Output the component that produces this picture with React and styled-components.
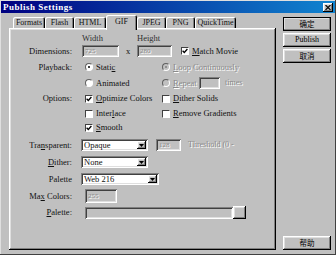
import React from 'react';
import styled, { createGlobalStyle, css } from 'styled-components';

const GlobalStyle = createGlobalStyle`
  html, body {
    margin: 0;
    padding: 0;
    background: #c0c0c0;
  }
  body {
    font-family: "Liberation Serif", "Times New Roman", serif;
    font-size: 8.5px;
    line-height: 1;
    color: #111;
  }
`;

const raised = css`
  box-shadow: inset -1px -1px #000, inset 1px 1px #fff, inset -2px -2px #808080,
    inset 2px 2px #dfdfdf;
`;

const sunken = css`
  box-shadow: inset 1px 1px #808080, inset -1px -1px #fff, inset 2px 2px #404040,
    inset -2px -2px #dfdfdf;
`;

const etched = css`
  color: #8a8a8a;
  text-shadow: 1px 1px 0 #fff;
`;

const tabs = [
  { name: 'Formats', w: 32 },
  { name: 'Flash', w: 29 },
  { name: 'HTML', w: 32 },
  { name: 'GIF', w: 31, active: true },
  { name: 'JPEG', w: 29 },
  { name: 'PNG', w: 29 },
  { name: 'QuickTime', w: 41 },
];

const Window = styled.div`
  width: 336px;
  height: 255px;
  box-sizing: border-box;
  padding: 1px;
  display: flex;
  flex-direction: column;
  background: #c0c0c0;
  box-shadow: inset -1px -1px #404040, inset 1px 1px #dfdfdf;
`;

const TitleBar = styled.div`
  height: 12px;
  flex-shrink: 0;
  display: flex;
  align-items: center;
  justify-content: space-between;
  padding: 0 2px;
  background: linear-gradient(to right, #000080, #1084d0);
`;

const Title = styled.span`
  color: #fff;
  font-weight: bold;
  font-size: 9px;
  letter-spacing: 0.5px;
`;

const CloseBox = styled.span`
  width: 10px;
  height: 9px;
  display: flex;
  align-items: center;
  justify-content: center;
  background: #c0c0c0;
  ${raised};
`;

const Body = styled.div`
  flex: 1;
  display: flex;
  padding: 2px 4px 4px 8px;
`;

const LeftCol = styled.div`
  width: 268px;
  display: flex;
  flex-direction: column;
`;

const TabRow = styled.div`
  height: 13px;
  flex-shrink: 0;
  display: flex;
  align-items: flex-end;
  padding-left: 4px;
  position: relative;
  z-index: 1;
`;

const Tab = styled.div`
  width: ${p => p.$w}px;
  height: ${p => (p.$active ? 15 : 11)}px;
  margin-bottom: ${p => (p.$active ? -2 : 0)}px;
  box-sizing: border-box;
  display: flex;
  align-items: center;
  justify-content: center;
  padding-bottom: ${p => (p.$active ? 2 : 0)}px;
  font-size: 8px;
  background: #c0c0c0;
  border-radius: 2px 2px 0 0;
  box-shadow: inset 1px 1px #fff, inset -1px 0 #000, inset -2px 0 #808080;
`;

const Panel = styled.div`
  flex: 1;
  padding: 6px 0 0 2px;
  ${raised};
`;

const Row = styled.div`
  height: ${p => p.$h}px;
  margin-top: ${p => p.$mt}px;
  display: flex;
  align-items: center;
`;

const Label = styled.span`
  width: 61px;
  margin-right: 9px;
  flex-shrink: 0;
  text-align: right;
  white-space: nowrap;
`;

const Controls = styled.div`
  height: 100%;
  display: flex;
  align-items: center;
  padding-left: ${p => p.$x || 0}px;
`;

const ColHead = styled.span`
  width: ${p => (p.$w ? `${p.$w}px` : 'auto')};
  color: #303030;
`;

const Field = styled.span`
  width: ${p => p.$w}px;
  height: ${p => p.$h || 12}px;
  margin-left: ${p => p.$ml || 0}px;
  box-sizing: border-box;
  flex-shrink: 0;
  display: flex;
  align-items: center;
  padding-left: 3px;
  font-size: 7px;
  background: ${p => (p.$disabled ? '#c0c0c0' : '#fff')};
  ${sunken};
  ${p => p.$disabled && etched};
`;

const Cross = styled.span`
  width: 18px;
  text-align: center;
`;

const Option = styled.label`
  width: ${p => (p.$w ? `${p.$w}px` : 'auto')};
  margin-left: ${p => p.$ml || 0}px;
  flex-shrink: 0;
  display: flex;
  align-items: center;
  gap: 3px;
  white-space: nowrap;
  ${p => p.$disabled && etched};
`;

const Box = styled.span`
  width: 8px;
  height: 8px;
  box-sizing: border-box;
  flex-shrink: 0;
  display: flex;
  align-items: center;
  justify-content: center;
  background: #fff;
  border: 1px solid;
  border-color: #404040 #fff #fff #404040;
  text-shadow: none;
`;

const Circle = styled.span`
  width: 8px;
  height: 8px;
  box-sizing: border-box;
  flex-shrink: 0;
  display: flex;
  align-items: center;
  justify-content: center;
  border-radius: 50%;
  border: 1px solid;
  border-color: #606060 #fff #fff #606060;
  background: ${p => (p.$disabled ? '#c0c0c0' : '#fff')};

  &::after {
    content: '';
    width: 2px;
    height: 2px;
    border-radius: 50%;
    background: ${p => (p.$disabled ? '#808080' : '#000')};
    display: ${p => (p.$on ? 'block' : 'none')};
  }
`;

const Key = styled.span`
  text-decoration: underline;
`;

const DimText = styled.span`
  margin-left: ${p => p.$ml || 0}px;
  white-space: nowrap;
  font-size: 8px;
  ${etched};
`;

const Select = styled.div`
  width: ${p => p.$w}px;
  height: 12px;
  box-sizing: border-box;
  display: flex;
  align-items: center;
  justify-content: space-between;
  padding: 2px 2px 2px 3px;
  background: #fff;
  ${sunken};
`;

const Arrow = styled.span`
  width: 9px;
  height: 8px;
  display: flex;
  align-items: center;
  justify-content: center;
  background: #c0c0c0;
  ${raised};
`;

const Browse = styled.span`
  width: 13px;
  height: 13px;
  flex-shrink: 0;
  background: #c0c0c0;
  ${raised};
`;

const RightCol = styled.div`
  width: 48px;
  margin-left: 7px;
  padding-top: 2px;
  display: flex;
  flex-direction: column;
  gap: 2px;
`;

const Button = styled.button`
  width: 48px;
  height: 14px;
  padding: 0;
  border: none;
  display: flex;
  align-items: center;
  justify-content: center;
  background: #c0c0c0;
  color: #000;
  font-family: ${p =>
    p.$cjk ? '"Noto Sans CJK SC", sans-serif' : '"Liberation Serif", serif'};
  font-size: ${p => (p.$cjk ? 7.5 : 8)}px;
  line-height: 1;
  ${raised};
  ${p => p.$default && 'outline: 1px solid #000; outline-offset: -1px;'};
  ${p => p.$bottom && 'margin-top: auto;'};
`;

const Tick = () => (
  <svg width="6" height="6" viewBox="0 0 6 6">
    <path d="M0.6 2.8 L2.3 4.5 L5.4 1" fill="none" stroke="#000" strokeWidth="1.3" />
  </svg>
);

const Check = ({ on }) => <Box>{on ? <Tick /> : null}</Box>;

const DropArrow = () => (
  <Arrow>
    <svg width="5" height="3" viewBox="0 0 5 3">
      <path d="M0 0 H5 L2.5 3 Z" fill="#000" />
    </svg>
  </Arrow>
);

const Dropdown = ({ w, value }) => (
  <Select $w={w}>
    <span>{value}</span>
    <DropArrow />
  </Select>
);

export default function App() {
  return (
    <>
      <GlobalStyle />
      <Window>
        <TitleBar>
          <Title>Publish Settings</Title>
          <CloseBox>
            <svg width="6" height="5" viewBox="0 0 6 5">
              <path d="M0.5 0 L5.5 5 M5.5 0 L0.5 5" stroke="#000" strokeWidth="1.1" />
            </svg>
          </CloseBox>
        </TitleBar>
        <Body>
          <LeftCol>
            <TabRow>
              {tabs.map(t => (
                <Tab key={t.name} $w={t.w} $active={t.active}>
                  {t.name}
                </Tab>
              ))}
            </TabRow>
            <Panel>
              <Row $h={8} $mt={0}>
                <Label />
                <Controls $x={1}>
                  <ColHead $w={55}>Width</ColHead>
                  <ColHead>Height</ColHead>
                </Controls>
              </Row>
              <Row $h={12} $mt={3}>
                <Label>Dimensions:</Label>
                <Controls $x={1}>
                  <Field $w={37} $disabled>725</Field>
                  <Cross>x</Cross>
                  <Field $w={35} $disabled>280</Field>
                  <Option $ml={9}>
                    <Check on />
                    <span>
                      <Key>M</Key>atch Movie
                    </span>
                  </Option>
                </Controls>
              </Row>
              <Row $h={10} $mt={5}>
                <Label>Playback:</Label>
                <Controls $x={4}>
                  <Option $w={77}>
                    <Circle $on />
                    <span>
                      Stati<Key>c</Key>
                    </span>
                  </Option>
                  <Option $disabled>
                    <Circle $on $disabled />
                    <span>
                      <Key>L</Key>oop Continuously
                    </span>
                  </Option>
                </Controls>
              </Row>
              <Row $h={12} $mt={5}>
                <Label />
                <Controls $x={4}>
                  <Option $w={77}>
                    <Circle />
                    <span>Animated</span>
                  </Option>
                  <Option $w={37} $disabled>
                    <Circle $disabled />
                    <span>
                      <Key>R</Key>epeat
                    </span>
                  </Option>
                  <Field $w={21} $disabled />
                  <DimText $ml={5}>times</DimText>
                </Controls>
              </Row>
              <Row $h={11} $mt={4}>
                <Label>Options:</Label>
                <Controls $x={4}>
                  <Option $w={77}>
                    <Check on />
                    <span>
                      <Key>O</Key>ptimize Colors
                    </span>
                  </Option>
                  <Option>
                    <Check />
                    <span>
                      <Key>D</Key>ither Solids
                    </span>
                  </Option>
                </Controls>
              </Row>
              <Row $h={11} $mt={4}>
                <Label />
                <Controls $x={4}>
                  <Option $w={77}>
                    <Check />
                    <span>
                      Inter<Key>l</Key>ace
                    </span>
                  </Option>
                  <Option>
                    <Check />
                    <span>
                      <Key>R</Key>emove Gradients
                    </span>
                  </Option>
                </Controls>
              </Row>
              <Row $h={11} $mt={3}>
                <Label />
                <Controls $x={4}>
                  <Option>
                    <Check on />
                    <span>
                      <Key>S</Key>mooth
                    </span>
                  </Option>
                </Controls>
              </Row>
              <Row $h={12} $mt={6}>
                <Label>
                  Tra<Key>n</Key>sparent:
                </Label>
                <Controls>
                  <Dropdown w={67} value="Opaque" />
                  <Field $w={25} $h={12} $ml={8} $disabled>
                    128
                  </Field>
                  <DimText $ml={7}>Threshold (0 -</DimText>
                </Controls>
              </Row>
              <Row $h={12} $mt={5}>
                <Label>
                  <Key>D</Key>ither:
                </Label>
                <Controls>
                  <Dropdown w={67} value="None" />
                </Controls>
              </Row>
              <Row $h={12} $mt={5}>
                <Label>Palette</Label>
                <Controls>
                  <Dropdown w={78} value="Web 216" />
                </Controls>
              </Row>
              <Row $h={14} $mt={4}>
                <Label>
                  Ma<Key>x</Key> Colors:
                </Label>
                <Controls $x={4}>
                  <Field $w={32} $h={14} $disabled>
                    255
                  </Field>
                </Controls>
              </Row>
              <Row $h={13} $mt={3}>
                <Label>
                  <Key>P</Key>alette:
                </Label>
                <Controls $x={4}>
                  <Field $w={148} $h={12} $disabled />
                  <Browse />
                </Controls>
              </Row>
            </Panel>
          </LeftCol>
          <RightCol>
            <Button $cjk $default>确定</Button>
            <Button>Publish</Button>
            <Button $cjk>取消</Button>
            <Button $cjk $bottom>帮助</Button>
          </RightCol>
        </Body>
      </Window>
    </>
  );
}
